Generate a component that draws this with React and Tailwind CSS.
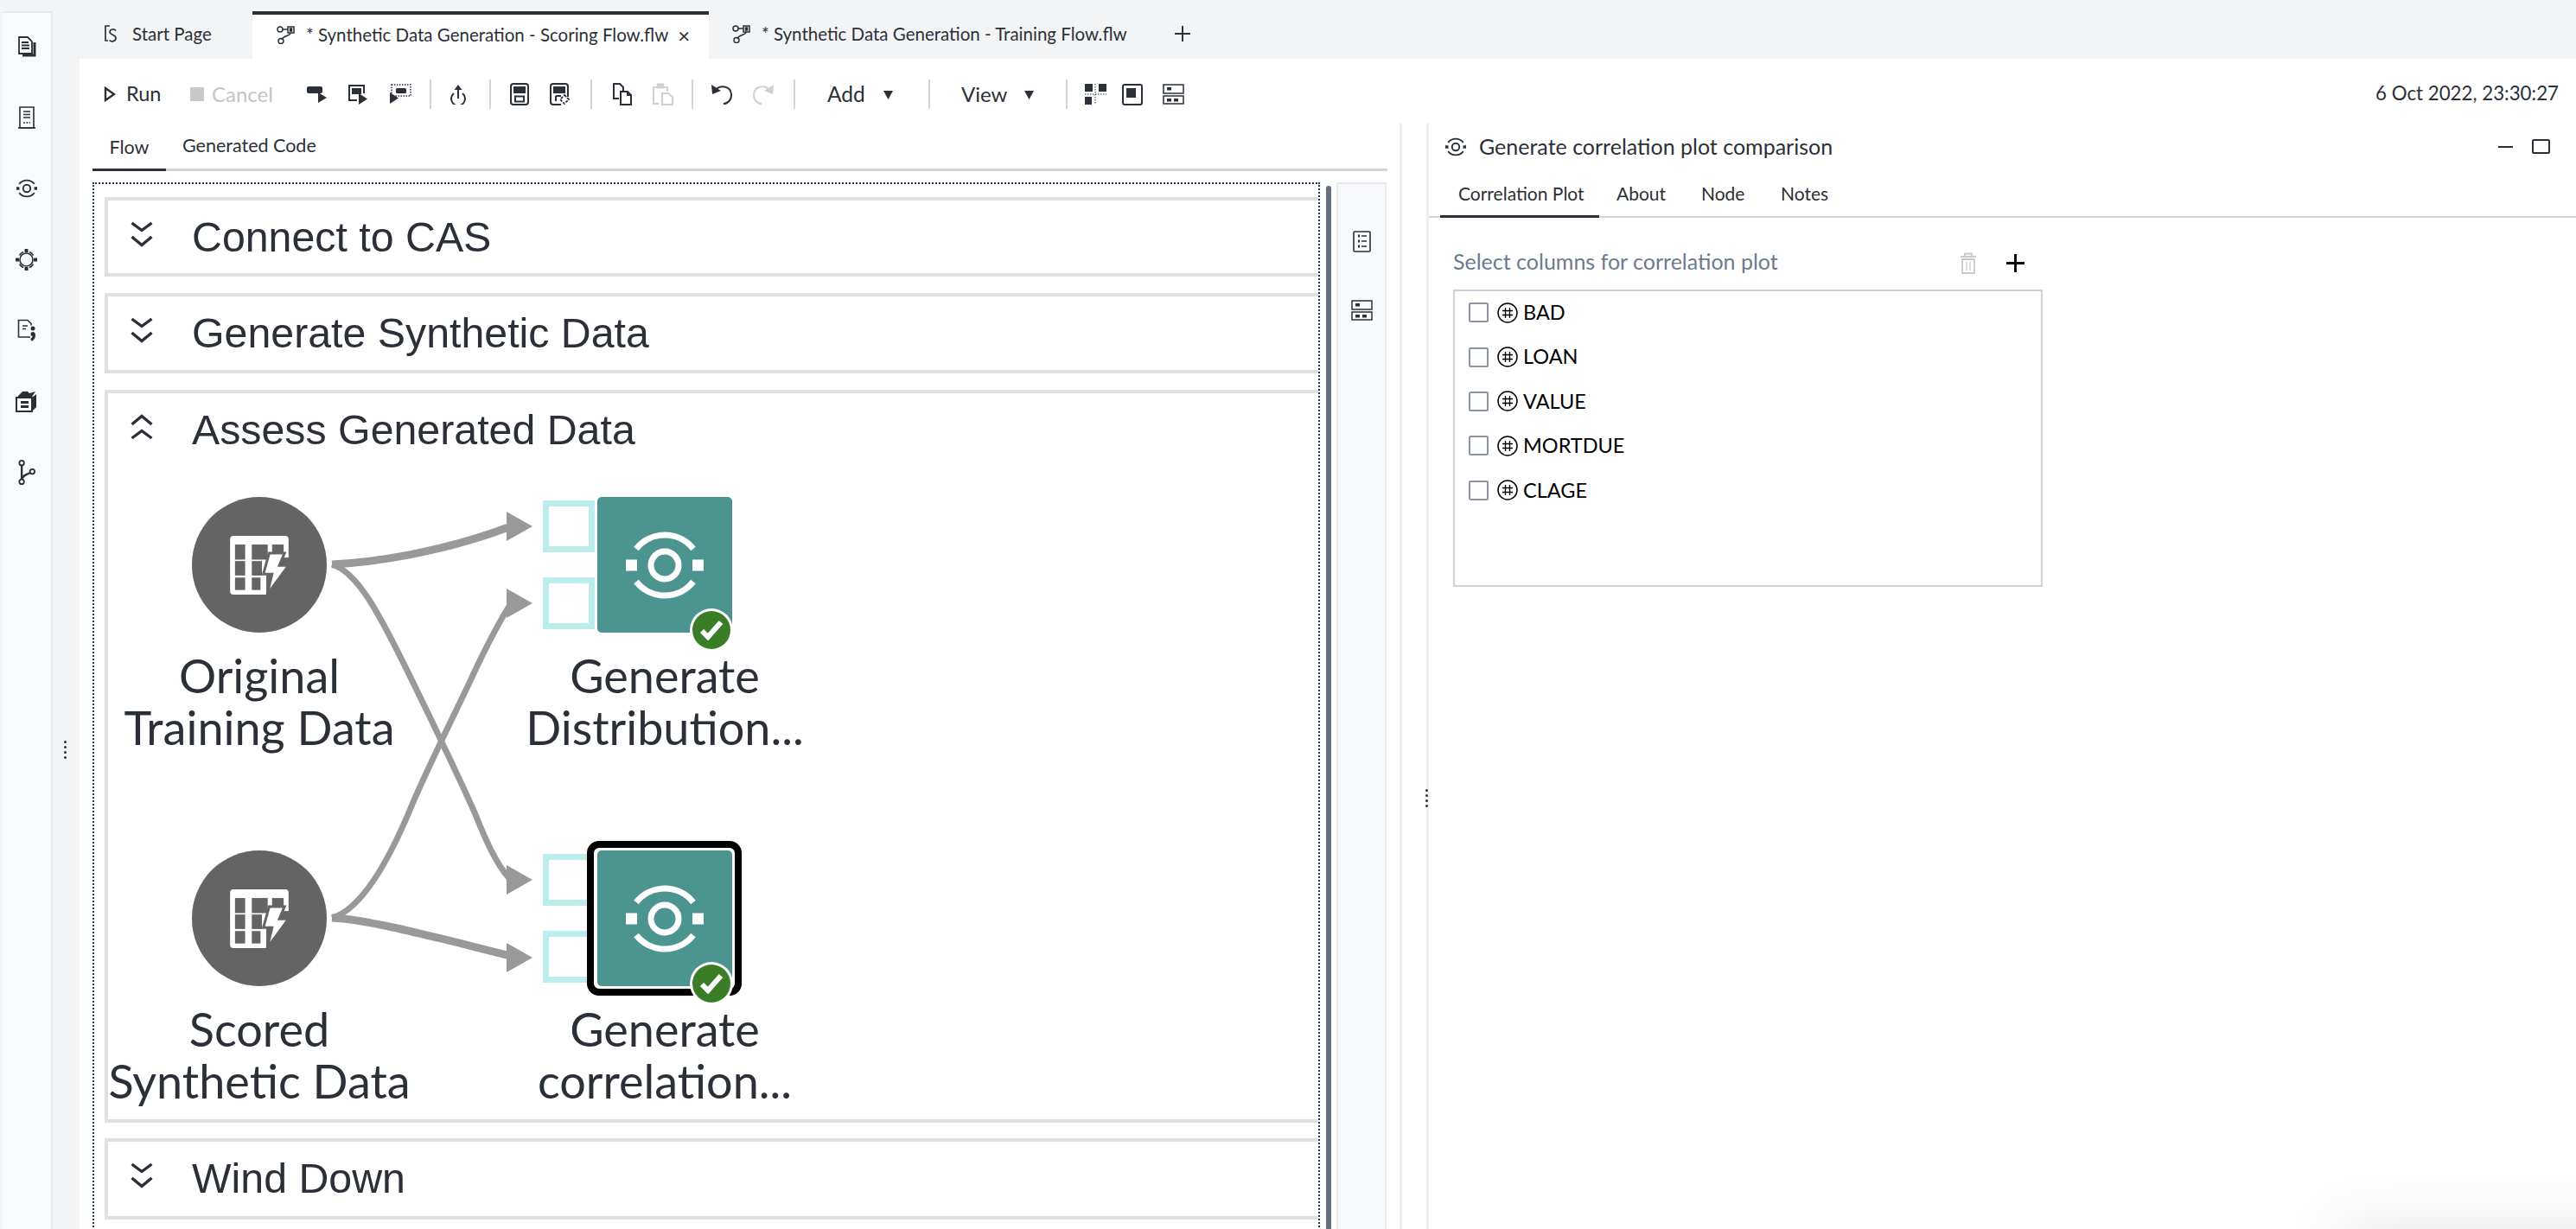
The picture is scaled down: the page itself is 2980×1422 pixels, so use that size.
const INK = '#2b3038'

function StartPageIcon() {
  return (
    <svg width="15" height="21" viewBox="0 0 15 21" fill="none" stroke={INK} strokeWidth="1.7">
      <path d="M7 1H2v17h3" />
      <path d="M14 6.500c-2-2.500-7-2-7 1.500s7 3 7 7-5 5-7.500 2.500" />
    </svg>
  )
}

function FlowIcon() {
  return (
    <svg width="21" height="21" viewBox="0 0 21 21" fill="none" stroke={INK} strokeWidth="1.5">
      <circle cx="4" cy="4" r="3" />
      <path d="M7 4h6" />
      <rect x="13" y="1" width="7" height="7" />
      <rect x="15.500" y="3" width="2" height="3" fill={INK} />
      <path d="M16 8c0 4-9 3-10 8" />
      <circle cx="5" cy="17.500" r="3" />
    </svg>
  )
}

// arcs + ring + two side squares, used on the teal nodes and in the rail
function NodeGlyph({ size, color }) {
  return (
    <svg width={size} height={size} viewBox="0 0 90 90" fill="none" stroke={color} strokeWidth="7">
      <circle cx="45" cy="45" r="16" />
      <path d="M12 26A42 42 0 0 1 78 26" />
      <path d="M12 64A42 42 0 0 0 78 64" />
      <rect x="0" y="38.500" width="13" height="13" fill={color} stroke="none" />
      <rect x="77" y="38.500" width="13" height="13" fill={color} stroke="none" />
    </svg>
  )
}

function TableBoltGlyph() {
  const bg = '#646464'
  return (
    <svg width="68" height="68" viewBox="0 0 202 203">
      <rect width="202" height="203" rx="12" fill="#fff" />
      <rect x="125" y="75" width="80" height="130" fill={bg} />
      <rect x="17" y="30" width="35" height="52" fill={bg} />
      <rect x="75" y="30" width="55" height="52" fill={bg} />
      <rect x="145" y="30" width="40" height="42" fill={bg} />
      <rect x="17" y="87" width="35" height="50" fill={bg} />
      <rect x="75" y="87" width="35" height="50" fill={bg} />
      <rect x="17" y="144" width="35" height="43" fill={bg} />
      <rect x="75" y="144" width="30" height="43" fill={bg} />
      <path d="M135 60h53l-18 42h32l-74 101 17-71h-30z" fill="#fff" stroke={bg} strokeWidth="9" strokeLinejoin="miter" />
    </svg>
  )
}

function RailDocs() {
  return (
    <svg width="24" height="26" viewBox="0 0 24 26" fill="none" stroke={INK} strokeWidth="1.8">
      <path d="M3 2h10l5 5v14H3z" />
      <path d="M6 8h8M6 11.500h9M6 15h9" />
      <path d="M21 8v15H7" strokeWidth="3" />
    </svg>
  )
}

function RailReport() {
  return (
    <svg width="22" height="26" viewBox="0 0 22 26" fill="none" stroke={INK} strokeWidth="1.6">
      <path d="M3 1h16v24H3z" />
      <path d="M1 25h20" />
      <path d="M7 6h8M7 9.500h8M7 13h8" />
      <path d="M7 19h8" strokeDasharray="2 1.500" />
    </svg>
  )
}

function RailTarget() {
  return (
    <svg width="25" height="25" viewBox="0 0 25 25" fill="none" stroke={INK} strokeWidth="1.600">
      <circle cx="12.500" cy="12.500" r="7.500" />
      <path d="M4.500 7.500a10 10 0 0 1 4.500-4M16 3.500a10 10 0 0 1 4.500 4M20.500 17.500a10 10 0 0 1-4.500 4M9 21.500a10 10 0 0 1-4.500-4" />
      <rect x="10.500" y="0" width="4" height="4" fill={INK} stroke="none" />
      <rect x="10.500" y="21" width="4" height="4" fill={INK} stroke="none" />
      <rect x="0" y="10.500" width="4" height="4" fill={INK} stroke="none" />
      <rect x="21" y="10.500" width="4" height="4" fill={INK} stroke="none" />
    </svg>
  )
}

function RailCode() {
  return (
    <svg width="22" height="26" viewBox="0 0 22 26" fill="none" stroke={INK} strokeWidth="1.600">
      <path d="M15 21H1.500V1.500H12l4 4v2" />
      <path d="M6 8h6M6 11.500h4" />
      <circle cx="18" cy="11" r="2.500" fill={INK} stroke="none" />
      <path d="M19 17c1 3-.5 6-3 7.500" strokeWidth="3" />
      <circle cx="18" cy="17.500" r="2.500" fill={INK} stroke="none" />
    </svg>
  )
}

function RailArchive() {
  return (
    <svg width="25" height="26" viewBox="0 0 25 26">
      <path d="M3 7l5-5h6l2 2 7-2-4 6H3z" fill={INK} />
      <path d="M1 9h18v16H1z" fill="#fff" stroke={INK} strokeWidth="2" />
      <path d="M19 9l5-4v15l-5 5z" fill={INK} />
      <rect x="6" y="13" width="9" height="3" fill={INK} />
      <rect x="6" y="18" width="9" height="3" fill={INK} />
    </svg>
  )
}

function RailBranch() {
  return (
    <svg width="22" height="29" viewBox="0 0 22 32" fill="none" stroke={INK} strokeWidth="2">
      <circle cx="4.500" cy="4" r="3" />
      <circle cx="4.500" cy="28" r="3" />
      <circle cx="18" cy="15" r="3" />
      <path d="M4.500 7v18" strokeWidth="2.600" />
      <path d="M5 25c0-5 5-6 10.500-8.500" strokeWidth="2.600" />
    </svg>
  )
}

function Sep() {
  return <div className="h-[34px] w-[2px] bg-[#d0d3d7]" />
}

function RunTri() {
  return (
    <svg width="14" height="18" viewBox="0 0 14 18" fill="none" stroke={INK} strokeWidth="2.400">
      <path d="M2 2l10 7-10 7z" />
    </svg>
  )
}

function ToolA() {
  return (
    <svg width="24" height="20" viewBox="0 0 24 20" fill={INK}>
      <rect x="0" y="1" width="18" height="8" rx="2" />
      <path d="M13 9h11l-5.500 0zM13 8l10 6-10 6z" />
    </svg>
  )
}

function ToolB() {
  return (
    <svg width="24" height="24" viewBox="0 0 24 24" fill="none" stroke={INK} strokeWidth="2">
      <path d="M11 19H2V2h17v9" />
      <rect x="5" y="5" width="11" height="7" fill={INK} stroke="none" />
      <path d="M13 11l10 6.500L13 24z" fill={INK} stroke="none" />
    </svg>
  )
}

function ToolC() {
  return (
    <svg width="26" height="24" viewBox="0 0 26 24" fill="none" stroke={INK} strokeWidth="1.500">
      <rect x="3" y="1" width="22" height="13" strokeDasharray="1.500 1.500" />
      <rect x="8" y="5" width="12" height="6" rx="1.500" fill={INK} stroke="none" />
      <path d="M1 10l10 6.500L1 23z" fill={INK} stroke="none" />
    </svg>
  )
}

function ToolUp() {
  return (
    <svg width="20" height="24" viewBox="0 0 20 24" fill="none" stroke={INK} strokeWidth="2">
      <path d="M5 11a8 8 0 1 0 10 0" />
      <path d="M10 17V3" />
      <path d="M5.500 7L10 1l4.500 6z" fill={INK} stroke="none" />
    </svg>
  )
}

function ToolD() {
  return (
    <svg width="22" height="26" viewBox="0 0 22 26" fill="none" stroke={INK} strokeWidth="2">
      <rect x="1" y="1" width="20" height="24" rx="3" />
      <rect x="4" y="4" width="14" height="8" fill={INK} stroke="none" />
      <rect x="6" y="15.500" width="10" height="6" />
    </svg>
  )
}

function ToolE() {
  return (
    <svg width="24" height="26" viewBox="0 0 24 26" fill="none" stroke={INK} strokeWidth="2">
      <path d="M13 25H4a3 3 0 0 1-3-3V4a3 3 0 0 1 3-3h14a3 3 0 0 1 3 3v12" />
      <rect x="4" y="4" width="14" height="8" fill={INK} stroke="none" />
      <path d="M7 15v6M7 15h6" />
      <path d="M17 14l5 5-5 5-5-5z" strokeWidth="1.800" strokeDasharray="3 1.500" />
    </svg>
  )
}

function ToolCopy({ color }) {
  return (
    <svg width="24" height="26" viewBox="0 0 24 26" fill="none" stroke={color} strokeWidth="2">
      <path d="M8 18H2V1h7l4 4v5" />
      <path d="M10 10h8l4 4v11H10z" fill={color === INK ? '#fff' : 'none'} />
      <path d="M18 10v4h4" />
    </svg>
  )
}

function ToolPaste() {
  const c = '#cfcfcf'
  return (
    <svg width="24" height="26" viewBox="0 0 24 26" fill="none" stroke={c} strokeWidth="2">
      <path d="M7 24H1V5h16v5" />
      <rect x="6" y="1.500" width="6" height="4" fill={c} />
      <path d="M11 12h7l5 4v9H11z" />
    </svg>
  )
}

function ToolUndo({ color, flip }) {
  return (
    <svg width="25" height="24" viewBox="0 0 25 24" fill="none" stroke={color} strokeWidth="2" className={flip ? '-scale-x-100' : ''}>
      <path d="M5 7c5-6 17-5 18 5 .5 6-4 11-9 11" />
      <path d="M0 1l1 11 10-4z" fill={color} stroke="none" />
    </svg>
  )
}

function Caret() {
  return (
    <svg width="11" height="11" viewBox="0 0 11 11" fill={INK}>
      <path d="M0 1h11L5.500 11z" />
    </svg>
  )
}

function LayoutGrid() {
  return (
    <svg width="25" height="24" viewBox="0 0 25 24" fill={INK}>
      <rect x="0" y="0" width="9" height="9" />
      <rect x="16" y="0" width="9" height="9" />
      <rect x="0" y="15" width="8" height="9" />
      <path d="M12 0v24M0 12h25" stroke={INK} strokeWidth="1" strokeDasharray="1.500 1.500" fill="none" />
    </svg>
  )
}

function LayoutSingle() {
  return (
    <svg width="24" height="25" viewBox="0 0 24 25" fill="none" stroke={INK} strokeWidth="2">
      <rect x="1" y="1" width="22" height="23" rx="2" />
      <rect x="5" y="5" width="11" height="11" fill={INK} stroke="none" />
    </svg>
  )
}

function LayoutStack() {
  return (
    <svg width="25" height="24" viewBox="0 0 25 24" fill="none" stroke={INK} strokeWidth="1.500">
      <rect x="1" y="1" width="23" height="10" />
      <rect x="1" y="14" width="23" height="9" />
      <rect x="5" y="4" width="5" height="3.500" fill={INK} stroke="none" />
      <rect x="5" y="17" width="5" height="3.500" fill={INK} stroke="none" />
      <rect x="13" y="17" width="5" height="3.500" fill={INK} stroke="none" />
    </svg>
  )
}

function ListIcon() {
  return (
    <svg width="21" height="25" viewBox="0 0 21 25" fill="none" stroke={INK} strokeWidth="1.600">
      <rect x="1" y="1" width="19" height="23" rx="1" />
      <path d="M6 6h2M6 12h2M6 18h2" strokeWidth="3" />
      <path d="M10 6h6M10 12h6M10 18h6" />
    </svg>
  )
}

function Chevrons({ up }) {
  return (
    <svg width="26" height="30" viewBox="0 0 26 30" fill="none" stroke={INK} strokeWidth="3.400" className={up ? '-scale-y-100' : ''}>
      <path d="M1.500 2L13 10.500 24.500 2" />
      <path d="M1.500 18L13 27.500 24.500 18" />
    </svg>
  )
}

function HashIcon() {
  return (
    <svg width="24" height="24" viewBox="0 0 24 24" fill="none" stroke="#000" strokeWidth="1.500">
      <circle cx="12" cy="12" r="11" />
      <path d="M9.500 6v12M14.500 6v12M6 9.500h12M6 14.500h12" strokeWidth="1.300" />
    </svg>
  )
}

function TrashIcon() {
  return (
    <svg width="20" height="25" viewBox="0 0 20 25" fill="none" stroke="#c9c9c9" strokeWidth="1.800">
      <path d="M1 5h18M6 5V1.500h8V5" />
      <path d="M3 8h14v16H3z" />
      <path d="M8 11v10M12 11v10" strokeWidth="1.200" />
    </svg>
  )
}

function PlusIcon({ size, color, width }) {
  return (
    <svg width={size} height={size} viewBox="0 0 22 22" fill="none" stroke={color} strokeWidth={width}>
      <path d="M11 0v22M0 11h22" />
    </svg>
  )
}

function Grip() {
  return (
    <div className="flex flex-col gap-[3px]">
      <div className="h-[3px] w-[3px] rounded-full bg-[#2b3038]" />
      <div className="h-[3px] w-[3px] rounded-full bg-[#2b3038]" />
      <div className="h-[3px] w-[3px] rounded-full bg-[#2b3038]" />
      <div className="h-[3px] w-[3px] rounded-full bg-[#2b3038]" />
    </div>
  )
}

function SectionHeader({ title, up }) {
  return (
    <div className="flex h-[84px] shrink-0 items-center pl-[26px]">
      <div className="mb-[6px]"><Chevrons up={up} /></div>
      <span className="ml-[45px] font-['Liberation_Sans',sans-serif] text-[48.3px] leading-none whitespace-nowrap text-[#2b3038]">{title}</span>
    </div>
  )
}

function NodeLabel({ left, top, lines }) {
  return (
    <div style={{ left, top }} className="absolute w-[360px] text-center text-[54px] leading-[60px] whitespace-nowrap text-[#2b3038]">
      {lines.map((l) => <div key={l}>{l}</div>)}
    </div>
  )
}

function DataNode({ top, lines }) {
  return (
    <>
      <div style={{ top }} className="absolute left-[97px] flex h-[157px] w-[156px] items-center justify-center rounded-full bg-[#646464]">
        <TableBoltGlyph />
      </div>
      <NodeLabel left={-5} top={top + 177} lines={lines} />
    </>
  )
}

function Port({ top }) {
  return <div style={{ top }} className="absolute left-[503px] h-[60px] w-[60px] border-[7px] border-[#bcecec] bg-white" />
}

function ActionNode({ top, lines, selected }) {
  return (
    <>
      <Port top={top + 4} />
      <Port top={top + 93} />
      {selected && <div style={{ top: top - 11 }} className="absolute left-[554px] h-[179px] w-[179px] rounded-[14px] border-[8px] border-black bg-white" />}
      <div style={{ top }} className="absolute left-[566px] flex h-[157px] w-[156px] items-center justify-center rounded-[5px] bg-[#4b9490]">
        <NodeGlyph size={90} color="#fff" />
      </div>
      <div style={{ top: top + 129 }} className="absolute left-[673px] flex h-[50px] w-[50px] items-center justify-center rounded-full bg-white">
        <div className="flex h-[44px] w-[44px] items-center justify-center rounded-full bg-[#3a7d27]">
          <svg width="28" height="24" viewBox="0 0 28 24" fill="none" stroke="#fff" strokeWidth="6">
            <path d="M3 13l7 7L25 3" />
          </svg>
        </div>
      </div>
      <NodeLabel left={464} top={top + 177} lines={lines} />
    </>
  )
}

function Wires() {
  return (
    <svg width="1400" height="760" viewBox="126 539 1400 760" fill="none" stroke="#999" className="absolute top-0 left-0">
      <path d="M385 653C430 651 510 640 592 609" strokeWidth="9" />
      <path d="M385 653C415 662 440 710 479 790S530 895 550 940C562 970 575 1000 590 1016" strokeWidth="7" />
      <path d="M385 1062C410 1055 440 1020 474 940C490 900 525 830 544 790C560 755 575 725 592 698" strokeWidth="7" />
      <path d="M385 1062C430 1064 510 1086 592 1106" strokeWidth="9" />
      <path d="M587 592l30 17-30 17zM587 681l30 17-30 17zM587 1001l30 17-30 17zM587 1091l30 17-30 17z" fill="#999" stroke="none" />
    </svg>
  )
}

function Column({ name }) {
  return (
    <div className="flex h-[51.4px] items-center pl-[16px]">
      <div className="h-[23px] w-[23px] rounded-[2px] border-2 border-[#8c95a3] bg-white" />
      <div className="ml-[10px]"><HashIcon /></div>
      <span className="ml-[6px] text-[23.5px] text-black">{name}</span>
    </div>
  )
}

export default function App() {
  return (
    <div className="relative flex h-[1422px] w-[2980px] overflow-hidden bg-[#f3f4f6] font-['Lato',sans-serif] text-[#2b3038]">
      {/* left rail */}
      <div className="mt-[13px] ml-[2px] flex w-[59px] shrink-0 flex-col items-center border-t-2 border-r-2 border-[#e8e9ed] bg-[#f9fafc] pt-[26px]">
        <div className="flex h-[26px] items-center"><RailDocs /></div>
        <div className="mt-[56px] flex h-[26px] items-center"><RailReport /></div>
        <div className="mt-[56px] flex h-[26px] items-center"><NodeGlyph size={24} color={INK} /></div>
        <div className="mt-[56px] flex h-[26px] items-center"><RailTarget /></div>
        <div className="mt-[56px] flex h-[26px] items-center"><RailCode /></div>
        <div className="mt-[56px] flex h-[26px] items-center"><RailArchive /></div>
        <div className="mt-[56px] flex h-[26px] items-center"><RailBranch /></div>
      </div>
      <div className="w-[31px] shrink-0 pt-[857px] pl-[13px]">
        <Grip />
      </div>

      <div className="flex min-w-0 flex-1 flex-col">
        {/* file tabs */}
        <div className="flex h-[68px] shrink-0 text-[20.500px]">
          <div className="mt-[13px] flex h-[55px] w-[200px] items-center pb-[3px] pl-[28px]">
            <StartPageIcon />
            <span className="ml-[18px] whitespace-nowrap">Start Page</span>
          </div>
          <div className="mt-[13px] flex h-[55px] w-[528px] items-center border-t-[4px] border-[#2b3038] bg-white pb-[4px] pl-[28px]">
            <FlowIcon />
            <span className="ml-[13px] whitespace-nowrap">* Synthetic Data Generation - Scoring Flow.flw</span>
            <span className="ml-[11px] text-[24px] leading-none">×</span>
          </div>
          <div className="mt-[13px] flex h-[55px] items-center pb-[3px] pl-[27px]">
            <FlowIcon />
            <span className="ml-[13px] whitespace-nowrap">* Synthetic Data Generation - Training Flow.flw</span>
            <div className="ml-[55px]"><PlusIcon size={18} color={INK} width={2.4} /></div>
          </div>
        </div>

        <div className="flex min-h-0 flex-1 flex-col bg-white">
          {/* toolbar */}
          <div className="flex h-[74px] shrink-0 items-center pt-[8px] pl-[28px] text-[23.500px]">
            <RunTri />
            <span className="ml-[12px] w-[40px]">Run</span>
            <div className="ml-[34px] h-[16px] w-[16px] bg-[#c8c8c8]" />
            <span className="ml-[9px] w-[73px] text-[24px] text-[#c4c4c4]">Cancel</span>
            <div className="ml-[37px]"><ToolA /></div>
            <div className="ml-[23px]"><ToolB /></div>
            <div className="ml-[24px]"><ToolC /></div>
            <div className="ml-[21px]"><Sep /></div>
            <div className="ml-[21px]"><ToolUp /></div>
            <div className="ml-[26px]"><Sep /></div>
            <div className="ml-[22px]"><ToolD /></div>
            <div className="ml-[24px]"><ToolE /></div>
            <div className="ml-[23px]"><Sep /></div>
            <div className="ml-[23px]"><ToolCopy color={INK} /></div>
            <div className="ml-[23px]"><ToolPaste /></div>
            <div className="ml-[21px]"><Sep /></div>
            <div className="ml-[21px]"><ToolUndo color={INK} /></div>
            <div className="ml-[22px]"><ToolUndo color="#cfcfcf" flip /></div>
            <div className="ml-[23px]"><Sep /></div>
            <span className="ml-[37px] w-[46px] text-[24.500px]">Add</span>
            <div className="ml-[19px]"><Caret /></div>
            <div className="ml-[41px]"><Sep /></div>
            <span className="ml-[36px] w-[51px] text-[24px]">View</span>
            <div className="ml-[22px]"><Caret /></div>
            <div className="ml-[37px]"><Sep /></div>
            <div className="ml-[20px]"><LayoutGrid /></div>
            <div className="ml-[18px]"><LayoutSingle /></div>
            <div className="ml-[23px]"><LayoutStack /></div>
            <span className="mr-[20px] ml-auto pb-[3px] text-[22.300px] whitespace-nowrap">6 Oct 2022, 23:30:27</span>
          </div>

          <div className="flex min-h-0 flex-1">
            {/* flow column */}
            <div className="flex w-[1530px] shrink-0 flex-col border-r-[3px] border-[#eeeff1] pr-[14px] pl-[15px]">
              <div className="flex h-[56px] shrink-0 items-end border-b-[3px] border-[#d0d4d8] text-[21.500px]">
                <div className="-mb-[3px] flex h-[53px] w-[85px] items-center justify-center border-b-[3px] border-[#2b3038]">Flow</div>
                <div className="ml-[19px] flex h-[53px] items-center whitespace-nowrap">Generated Code</div>
              </div>
              <div className="mt-[13px] flex min-h-0 flex-1">
                <div className="flex h-[1300px] w-[1420px] shrink-0 flex-col gap-[19px] border-2 border-dotted border-[#1d3557] pt-[15px] pl-[12px]">
                  <div className="h-[92px] shrink-0 border-[4px] border-r-0 border-[#e0e0e0]">
                    <SectionHeader title="Connect to CAS" />
                  </div>
                  <div className="h-[93px] shrink-0 border-[4px] border-r-0 border-[#e0e0e0]">
                    <SectionHeader title="Generate Synthetic Data" />
                  </div>
                  <div className="flex h-[848px] shrink-0 flex-col border-[4px] border-r-0 border-[#e0e0e0]">
                    <SectionHeader title="Assess Generated Data" up />
                    <div className="relative flex-1">
                      <Wires />
                      <DataNode top={36} lines={['Original', 'Training Data']} />
                      <DataNode top={445} lines={['Scored', 'Synthetic Data']} />
                      <ActionNode top={36} lines={['Generate', 'Distribution...']} />
                      <ActionNode top={445} lines={['Generate', 'correlation...']} selected />
                    </div>
                  </div>
                  <div className="-mt-[1px] h-[94px] shrink-0 border-[4px] border-r-0 border-[#e0e0e0]">
                    <SectionHeader title="Wind Down" />
                  </div>
                </div>
                <div className="mt-[4px] ml-[7px] h-[1300px] w-[6px] shrink-0 rounded-t-full bg-[#64707d]" />
                <div className="ml-[6px] flex h-[1300px] w-[58px] shrink-0 flex-col items-center border-x-2 border-t-2 border-[#e8e9ed] bg-[#f8f9fb] pt-[54px]">
                  <ListIcon />
                  <div className="mt-[55px]"><LayoutStack /></div>
                </div>
              </div>
            </div>

            {/* splitter */}
            <div className="relative z-10 flex w-[28px] shrink-0 justify-end pt-[771px]">
              <div className="-mr-[2px]"><Grip /></div>
            </div>

            {/* properties panel */}
            <div className="flex min-w-0 flex-1 flex-col border-l-[3px] border-[#eeeff1]">
              <div className="flex h-[52px] shrink-0 items-center pt-[3px] pr-[30px] pl-[19px]">
                <NodeGlyph size={24} color={INK} />
                <span className="ml-[15px] text-[25px] whitespace-nowrap">Generate correlation plot comparison</span>
                <div className="ml-auto h-[2px] w-[17px] bg-[#2b3038]" />
                <div className="ml-[22px] h-[17px] w-[21px] rounded-[2px] border-2 border-[#2b3038]" />
              </div>
              <div className="flex h-[58px] shrink-0 items-end border-b-2 border-[#d0d4d8] pl-[13px] text-[21px]">
                <div className="-mb-[2px] flex h-[56px] w-[184px] items-center border-b-[3px] border-[#2b3038] pt-[3px] pl-[21px] whitespace-nowrap">Correlation Plot</div>
                <div className="ml-[20px] flex h-[56px] w-[57px] items-center pt-[3px]">About</div>
                <div className="ml-[41px] flex h-[56px] w-[51px] items-center pt-[3px]">Node</div>
                <div className="ml-[41px] flex h-[56px] items-center pt-[3px]">Notes</div>
              </div>
              <div className="ml-[28px] w-[682px] pt-[28px]">
                <div className="flex h-[48px] items-center">
                  <span className="pb-[2px] text-[25px] whitespace-nowrap text-[#6b7a90]">Select columns for correlation plot</span>
                  <div className="ml-auto"><TrashIcon /></div>
                  <div className="mr-[21px] ml-[34px]"><PlusIcon size={21} color="#000" width={3} /></div>
                </div>
                <div className="mt-[7px] h-[344px] border-2 border-[#cdd1d8]">
                  <div className="-mt-[1px]">
                    <Column name="BAD" />
                    <Column name="LOAN" />
                    <Column name="VALUE" />
                    <Column name="MORTDUE" />
                    <Column name="CLAGE" />
                  </div>
                </div>
              </div>
            </div>
          </div>
        </div>
      </div>

      {/* faint shadow of a popup below the fold */}
      <div className="absolute top-[1422px] left-[2700px] h-[40px] w-[400px] rounded-[30px] shadow-[0_0_70px_rgba(0,0,0,0.14)]" />
    </div>
  )
}
